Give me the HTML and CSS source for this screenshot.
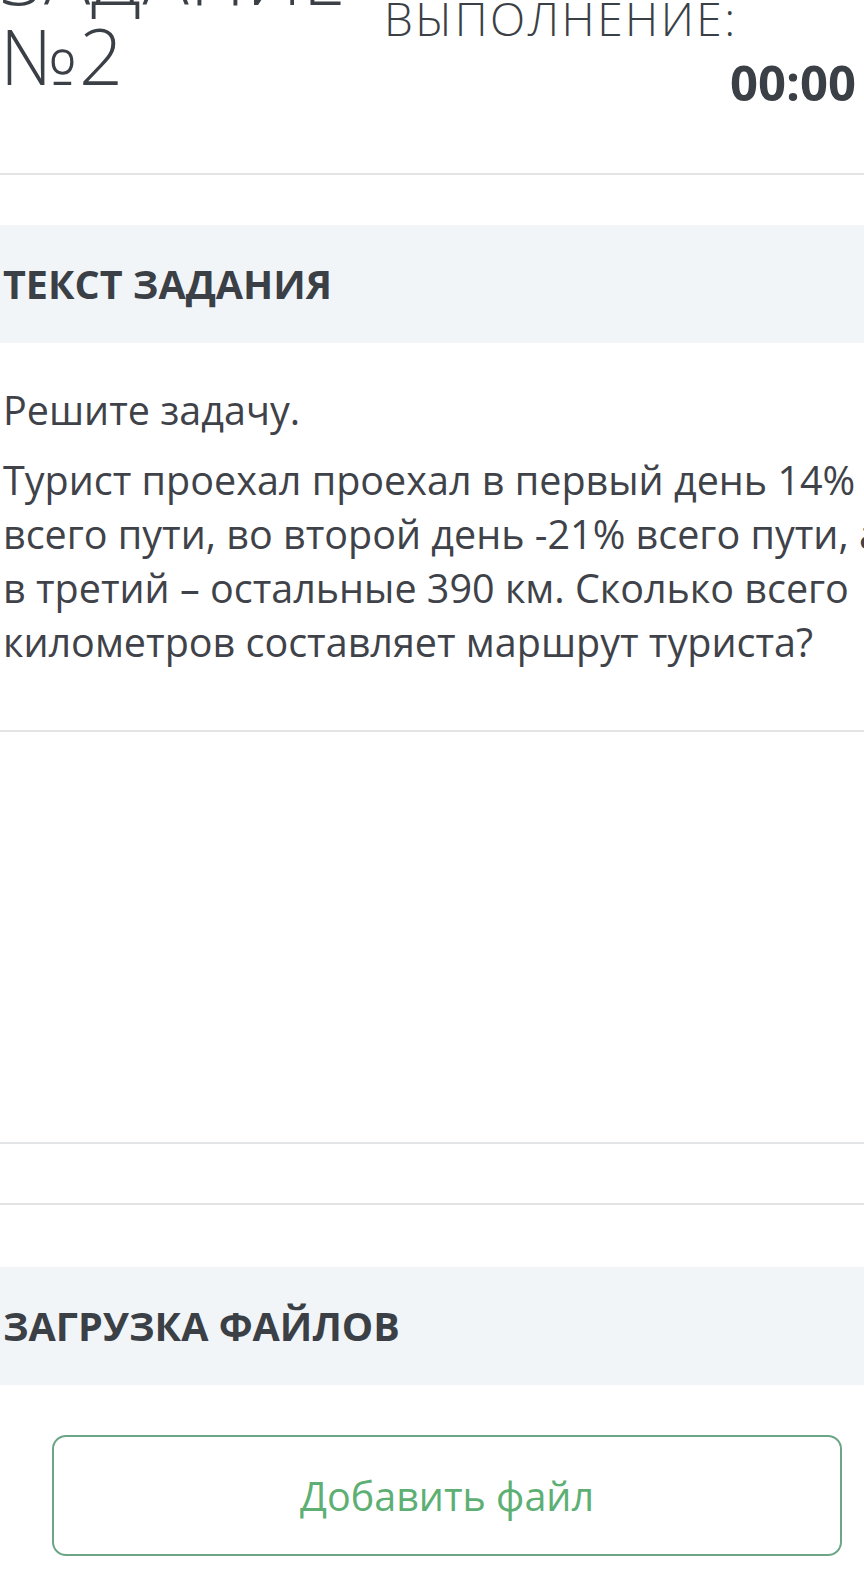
FILE: index.html
```html
<!DOCTYPE html>
<html lang="ru">
<head>
<meta charset="utf-8">
<title>Задание №2</title>
<link rel="stylesheet" href="styles.css">
</head>
<body>
<div class="page">
  <header class="task-header">
    <h1 class="task-title">ЗАДАНИЕ<br>№2</h1>
    <div class="timer">
      <div class="timer-label">ВРЕМЯ НА<br>ВЫПОЛНЕНИЕ:</div>
      <div class="timer-value">00:00</div>
    </div>
  </header>
  <hr class="divider divider-top">

  <section class="block">
    <h2 class="block-head">ТЕКСТ ЗАДАНИЯ</h2>
    <div class="task-body">
      <p class="task-line">Решите задачу.</p>
      <p class="task-line">Турист проехал проехал в первый день 14% всего пути, во второй день -21% всего пути, а в третий – остальные 390 км. Сколько всего километров составляет маршрут туриста?</p>
    </div>
  </section>
  <hr class="divider divider-mid">
  <div class="answer-area"></div>
  <hr class="divider">
  <hr class="divider divider-gap">

  <section class="block block-upload">
    <h2 class="block-head">ЗАГРУЗКА ФАЙЛОВ</h2>
    <div class="upload-body">
      <button class="add-file" type="button">Добавить файл</button>
    </div>
  </section>
</div>
</body>
</html>
```

FILE: styles.css
```css
html, body {
  margin: 0;
  padding: 0;
  overflow: hidden;
  background: #ffffff;
}

body {
  width: 864px;
  height: 1581px;
  font-family: "Open Sans", "Noto Sans", sans-serif;
  color: #3b3f46;
}

.page {
  width: 864px;
  overflow: hidden;
}

.task-header {
  display: flex;
  align-items: flex-start;
  margin-top: -64px;
  height: 237px;
}

.task-title {
  margin: 0;
  width: 384px;
  flex: none;
  font-size: 77px;
  line-height: 80px;
  letter-spacing: 1px;
  font-weight: 300;
  color: #3b3f46;
  white-space: nowrap;
}

.timer {
  flex: 1;
  margin-top: 10px;
  padding-right: 8px;
  display: flex;
  flex-direction: column;
}

.timer-label {
  font-size: 46px;
  line-height: 48px;
  letter-spacing: 2.5px;
  font-weight: 300;
  white-space: nowrap;
}

.timer-value {
  margin-top: 10px;
  align-self: flex-end;
  font-size: 49px;
  line-height: 60px;
  font-weight: 700;
}

.divider {
  margin: 0;
  border: 0;
  height: 2px;
  background: #e3e4e5;
}

.block {
  margin-top: 50px;
}

.block-head {
  margin: 0;
  background: #f2f5f8;
  height: 118px;
  line-height: 118px;
  padding-left: 3px;
  font-size: 39.5px;
  font-weight: 700;
  color: #3b3f46;
}

.task-body {
  padding: 40px 0 0 3px;
  width: 892px;
  height: 347px;
}

.task-line {
  margin: 0 0 16px;
  font-size: 39.5px;
  line-height: 54px;
  color: #3f4349;
}

.answer-area {
  height: 410px;
}

.divider-gap {
  margin-top: 59px;
}

.block-upload {
  margin-top: 62px;
}

.upload-body {
  padding: 50px 22px 0 52px;
}

.add-file {
  display: block;
  width: 790px;
  height: 121px;
  border: 2px solid #6ca686;
  border-radius: 14px;
  background: #ffffff;
  font-family: "Open Sans", "Noto Sans", sans-serif;
  font-size: 39.5px;
  color: #5daf74;
  padding: 0;
}
```
